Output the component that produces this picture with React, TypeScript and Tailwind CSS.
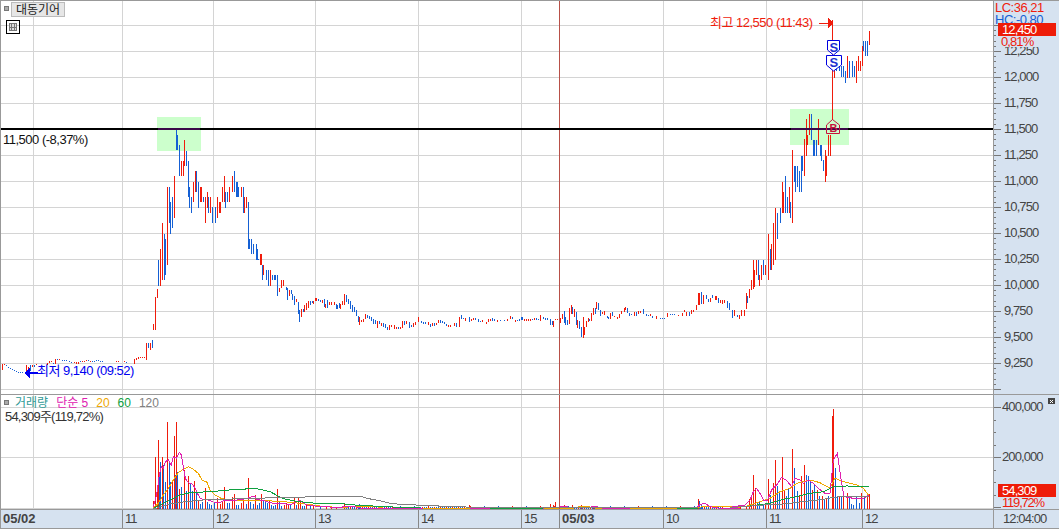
const RED = '#f01c0c'
const BLUE = '#1560d4'

// bars traced from the chart: "x top bottom colour", x/y in 3x units from an origin
const parseBars = (x0: number, y0: number, s: string) =>
  s.split('|').map(r => {
    const [x, t, b, c] = r.trim().split(' ')
    const top = Math.floor(y0 + Number(t) / 3)
    return { x: Math.floor(x0 + Number(x) / 3), y: top, h: Math.max(1, Math.floor(y0 + Number(b) / 3) - top), c: c === 'r' ? RED : BLUE }
  })

const parseVol = (x0: number, y0: number, s: string) =>
  s.split('|').map(r => {
    const [x, t, c] = r.trim().split(' ')
    const top = Math.floor(y0 + Number(t) / 3)
    return { x: Math.floor(x0 + Number(x) / 3), y: top, h: 509 - top, c: c === 'r' ? RED : BLUE }
  })

const pts = (x0: number, y0: number, s: string) =>
  s.split(' ').map(p => {
    const [x, y] = p.split(',')
    return `${x0 + Number(x) / 3},${y0 + Number(y) / 3}`
  }).join(' ')

const priceBars = [
  ...parseBars(0, 355, '6 27 45 r|12 27 30 r|18 30 33 b|24 36 39 b|30 39 42 b|36 42 45 b|42 45 48 b|48 48 51 b|54 51 54 b|60 51 54 b|66 51 54 b|78 30 48 r|84 36 45 r|90 30 48 b|96 30 36 r|102 30 36 b|108 27 30 r|141 24 30 r|147 18 24 r|153 18 21 r|160 24 27 b|165 12 27 r|171 12 15 b|178 12 15 r|186 15 18 b|192 15 18 b|200 15 18 b|208 18 21 b|214 21 24 b|222 21 24 r|228 21 27 r|234 21 27 r|240 18 21 b|246 18 21 r|252 18 21 r|258 15 18 r|264 15 18 b|270 18 21 r|276 18 21 b|282 18 21 b|288 15 18 b|294 15 18 b|300 18 21 b|306 18 21 b|348 18 21 r|354 18 21 r|372 18 21 r|378 21 24 b|402 12 27 r|408 9 15 r|414 6 12 r|420 6 9 r|426 6 9 r|432 6 9 r|438 -12 9 r'),
  ...parseBars(0, 340, '438 10 60 r|444 10 25 b|450 10 30 r|456 0 25 b'),
  ...parseBars(140, 110, '40 642 660 r|46 562 660 r|52 537 566 r|55 450 528 b|61 417 528 r|67 339 510 r|73 372 510 b|76 387 495 b|82 231 465 r|88 231 340 b|90 276 340 b|91 276 372 b|97 261 354 b|103 198 324 r|109 57 120 b|112 75 120 b|118 105 198 b|124 153 198 r|130 153 198 r|133 90 168 r|139 123 168 b|145 153 261 b|148 231 294 b|154 261 309 b|160 216 276 r|167 183 246 r|170 183 246 b|175 216 294 b|182 231 276 r|185 231 276 r|190 261 276 b|196 261 339 r|202 246 294 r|205 261 309 b|211 261 309 r|217 291 339 b|226 291 339 b|232 261 324 r|238 276 309 r|241 276 309 r|247 231 276 r|253 198 276 r|256 246 294 b|262 246 276 b|268 231 276 r|277 198 246 r|283 183 246 b|289 216 261 b|292 216 261 b|295 231 261 b|304 231 261 r|310 231 309 b|313 261 309 r|319 261 294 r|325 276 417 b|328 387 417 b|333 387 432 b|339 402 432 b|348 402 450 b|351 417 450 b|354 447 450 b|362 432 465 r|364 432 465 r|366 465 510 b|370 465 495 r|378 480 510 b|384 480 528 b|390 480 528 r|396 495 510 b|402 495 510 b|405 495 510 b|411 495 558 b|418 534 546 r|424 510 534 r|430 510 528 r|438 531 540 b|442 534 570 b|448 540 558 r|454 540 552 b|457 552 570 b|463 558 585 b|469 567 576 r|475 576 612 b|478 600 636 b|484 597 621 r|490 600 606 r|493 585 606 r|499 579 600 r|505 573 594 r|511 573 585 b|520 573 582 r|528 564 573 r|535 567 573 b'),
  ...parseBars(300, 285, '3 75 96 r|9 72 81 b|14 60 81 r|20 54 72 r|25 51 69 r|31 48 60 b|36 48 54 b|40 48 57 r|46 39 48 r|54 42 48 b|60 45 51 b|66 45 54 r|72 42 66 b|76 57 69 r|82 45 69 b|87 51 60 r|93 51 60 r|102 51 60 r|108 57 72 b|113 60 72 b|118 54 69 b|122 57 72 r|128 48 60 r|133 27 60 r|139 30 51 b|145 42 57 b|150 48 72 b|157 60 81 b|163 66 81 b|169 75 93 b|175 93 111 b|179 96 120 r|185 105 111 r|190 102 111 r|197 87 102 r|203 90 99 b|209 93 102 b|215 96 108 b|221 102 117 b|227 105 117 b|233 108 129 r|239 108 117 b|245 114 123 r|251 114 126 b|257 117 129 b|263 126 135 b|269 120 135 r|275 120 126 r|284 120 132 r|290 126 132 r|296 126 132 b|302 126 132 r|308 108 129 r|314 108 120 b|320 108 117 r|328 111 129 b|334 120 126 b|340 114 126 r|346 111 120 r|355 96 111 r|364 108 114 b|370 111 117 b|376 111 117 b|385 111 120 r|391 117 126 b|397 114 123 r|403 114 123 b|409 114 120 r|415 105 114 r|421 105 114 b|427 108 114 b|433 111 117 b|439 117 123 b|445 120 126 r|451 120 126 r|463 114 123 r|470 114 126 b|478 96 126 r|485 90 102 b|491 99 102 b|497 99 108 r|508 96 111 b|514 102 108 r|520 99 105 r|526 99 105 b|534 102 111 b|540 108 111 b|546 105 111 r|558 111 117 r|564 102 111 r|570 102 108 r|576 99 108 b|582 102 108 b|593 105 111 r|600 105 108 b|612 105 108 b|621 102 108 r|630 93 102 r|636 96 102 b|645 105 111 r|651 105 108 b|657 102 108 b|666 96 105 b|672 102 108 r|680 102 108 r|686 102 108 b'),
  ...parseBars(520, 280, '5 111 120 b|20 117 123 r|26 117 123 r|32 117 123 r|38 117 120 b|44 114 120 r|50 114 120 b|56 117 120 b|62 105 123 r|70 111 117 b|76 114 120 b|82 114 120 b|90 117 135 b|97 123 135 b|100 123 141 r|106 117 120 r|112 117 120 r|121 114 129 r|127 102 117 r|133 93 129 b|136 111 135 b|142 120 135 b|148 84 132 r|154 75 102 r|157 81 102 b|163 87 111 r|169 96 135 b|172 120 144 r|178 123 147 b|184 141 171 b|190 111 174 r|193 141 165 r|198 123 141 r|205 114 126 r|208 117 123 b|214 99 123 r|220 84 105 r|225 84 102 b|229 66 87 r|235 69 90 b|241 90 108 b|247 96 102 r|253 93 105 r|262 108 114 b|265 111 117 b|271 99 117 r|277 96 108 b|283 108 111 r|292 111 117 r|298 102 114 r|304 93 102 r|313 84 96 r|316 81 90 r|322 84 99 b|328 99 108 b|334 102 105 b|343 96 108 r|350 96 108 b|355 93 102 r|361 93 99 r|370 87 102 b|379 102 108 b|385 105 108 b|391 102 108 r|397 108 114 b|408 108 117 r|421 114 117 b|427 114 117 b|433 114 117 b|442 99 111 r|451 102 105 b|457 102 105 b|463 102 105 b|475 105 108 r|486 99 108 r|492 90 96 r|500 96 108 r|507 96 108 b|515 90 102 r|521 90 96 r|529 75 90 r|535 39 75 r|538 39 75 r|544 36 72 b|551 45 72 r|558 45 57 b|565 57 66 b|571 54 66 r|578 45 54 b|587 48 60 r|590 48 60 r|595 54 69 b|601 60 69 r|607 60 72 r|613 60 69 r|621 63 84 b|628 69 90 b|637 90 114 b|643 90 108 r|652 105 111 b|658 105 117 r|664 90 108 r|673 90 108 r|679 39 87 r|682 48 69 b|688 27 54 r|694 0 27 r|700 0 27 r|703 0 21 r|717 0 15 r'),
  ...parseBars(740, 100, '28 567 570 r|34 540 570 r|40 480 561 r|44 510 555 r|49 480 525 r|55 480 540 b|58 525 558 r|64 495 540 r|70 480 525 b|76 495 525 r|85 402 540 r|91 447 510 b|94 432 510 r|100 369 495 r|106 324 480 r|112 339 417 b|121 324 369 b|127 246 339 r|130 276 339 r|136 228 339 b|142 291 339 b|148 261 339 r|151 306 354 b|157 150 369 r|164 198 246 b|166 198 276 b|172 198 261 b|178 213 276 b|184 168 276 b|187 168 213 b|193 118 228 r|199 57 168 r|202 105 135 r|209 42 105 r|214 42 120 b|221 120 168 b|224 120 168 b|228 120 168 b|235 57 135 r|242 135 168 b|245 135 183 b|250 180 213 b|256 150 246 r|259 168 228 r|265 105 168 r|272 105 168 r'),
  ...parseBars(760, 0, '217 60 360 r|217 210 235 r|224 210 235 r|230 200 215 b|237 200 215 b|243 200 232 b|249 200 232 b|255 215 250 b|262 170 235 r|269 185 235 b|276 185 232 b|283 200 232 b|289 185 250 r|295 170 215 r|302 185 215 r|306 138 200 r|309 123 155 b|315 123 170 b|321 123 170 b|327 93 137 r'),
]

const dust = Array.from({ length: 190 }, (_, i) => `${i * 6 + 12} ${i % 7 === 0 ? 108 : 113} ${i % 3 === 0 ? 'r' : 'b'}`).join('|')

const volBars = [
  ...parseVol(140, 410, '40 275 r|46 141 r|52 234 r|55 90 r|58 195 b|61 156 b|67 141 r|70 165 b|76 216 b|82 36 r|88 156 b|91 216 b|97 213 r|103 78 r|106 195 b|109 36 r|112 186 b|118 237 r|124 232 b|133 180 r|139 243 b|145 198 r|151 222 b|157 245 b|163 213 r|169 240 b|175 272 r|181 282 b|187 276 b|196 234 r|203 276 b|209 282 b|215 285 b|223 279 b|232 265 r|241 282 r|247 276 r|253 231 r|262 279 b|268 279 b|277 261 r|283 252 r|290 285 b|296 285 b|304 279 r|310 265 r|318 282 b|325 204 r|331 276 b|340 282 b|346 255 r|352 285 b|358 279 b|364 252 r|370 273 b|376 273 b|382 279 b|388 270 r|394 285 b|400 288 b|406 285 b|412 237 r|418 276 b|424 288 b|433 285 r|440 279 r|446 285 r|452 285 b|463 264 r|470 285 b|476 264 r|482 276 r|488 288 b|494 288 b|500 285 r|510 290 b|520 288 r|540 290 b|560 288 r|575 288 r|590 292 r'),
  ...parseVol(340, 470, dust),
  ...parseVol(340, 470, '13 100 r|58 103 b|388 105 r|600 108 r|630 104 r|640 106 r|645 98 r|672 105 r|697 105 r|724 105 r|760 108 r|1074 87 r|1078 93 b|1085 106 b|1200 108 r'),
  ...parseVol(730, 390, '0 348 r|6 350 b|28 350 r|50 350 r|58 327 r|64 315 r|70 255 r|76 295 r|82 340 b|88 335 b|100 345 b|105 340 r|115 267 r|121 315 b|130 280 r|136 212 r|142 290 b|148 305 b|157 201 r|163 300 r|170 320 b|175 295 b|187 177 r|193 234 b|201 305 b|207 320 r|215 258 r|222 225 r|228 255 b|234 258 b|240 270 b|247 300 r|253 285 b|262 300 r|268 320 b|277 320 r|283 330 b|290 325 r|296 320 b|307 80 r|310 57 r|316 234 b|322 320 b|328 320 r|334 320 b|341 320 r|352 310 r|358 322 b|364 342 b|371 345 b|380 322 b|388 340 b|395 310 r|404 320 b|411 320 r|417 312 r'),
]

const volLines = [
  { c: '#f0a800', p: [
    pts(140, 410, '40,293 55,280 70,255 85,235 100,210 115,188 130,178 145,170 160,178 175,190 187,212 200,215 210,240 225,255 245,266 270,270 330,270 380,272 430,275 480,280 540,288 600,293'),
    pts(340, 470, '0,114 50,108 110,110 130,114 250,115 700,115 720,109 745,109 760,114 870,115 1010,115 1122,109 1175,109 1200,113'),
    pts(730, 390, '0,350 50,348 80,338 120,325 150,305 180,295 200,280 240,270 270,278 300,295 315,265 340,275 380,285 400,295 417,318'),
  ] },
  { c: '#e020b0', p: [
    pts(140, 410, '40,290 46,270 52,240 58,195 64,170 70,175 76,155 85,150 94,165 100,140 109,145 118,127 124,135 130,170 136,205 142,215 148,220 157,222 166,235 172,250 181,265 190,268 205,270 220,276 240,277 255,270 270,272 290,270 310,268 330,262 345,258 350,268 370,272 400,280 430,280 450,285 480,270 500,285 540,290 600,292'),
    pts(340, 470, '0,114 10,110 45,110 60,114 160,114 200,115 600,115 640,112 680,110 700,114 770,110 790,115 1070,114 1080,103 1095,100 1110,110 1140,115 1200,115'),
    pts(730, 390, '0,352 45,345 60,330 70,305 80,295 90,310 100,330 112,332 125,300 140,285 155,262 170,272 185,290 195,265 210,270 220,280 235,270 250,280 265,295 285,310 300,310 310,210 322,190 332,260 342,320 370,325 400,325 417,315'),
  ] },
  { c: '#10a040', p: [
    pts(140, 410, '40,295 70,280 100,265 120,255 150,248 190,246 250,242 285,238 350,236 390,245 430,266 470,274 530,280 600,281'),
    pts(340, 470, '0,100 15,102 55,106 120,109 180,112 240,114'),
    pts(730, 390, '0,353 60,348 120,340 160,328 200,320 240,310 280,305 310,290 350,288 417,289'),
  ] },
  { c: '#808080', p: [
    pts(140, 410, '40,297 90,282 130,276 190,270 250,268 330,265 470,262 550,259 600,260'),
    pts(340, 470, '0,78 60,78 80,85 120,92 150,100 180,103 250,106 340,110 430,112.5 1074,112.5'),
    pts(730, 390, '0,353 100,345 160,342 220,335 280,328 310,322 350,318 417,318'),
  ] },
]

// flat runs along the bottom of the volume pane, in 3x units from x=340
const baseRuns = [
  { a: 160, b: 200, c: '#e020b0' },
  { a: 250, b: 390, c: '#f0a800' },
  { a: 415, b: 450, c: '#e020b0' },
  { a: 450, b: 610, c: '#10a040' },
  { a: 800, b: 865, c: '#e020b0' },
  { a: 870, b: 1010, c: '#f0a800' },
  { a: 1010, b: 1075, c: '#10a040' },
]

const vGrid = [33, 122, 213, 315, 418, 521, 663, 766, 862]
const hGrid = [25, 51, 77, 103, 155, 181, 207, 233, 259, 285, 311, 337, 363, 389]
const prices = ['12,250', '12,000', '11,750', '11,500', '11,250', '11,000', '10,750', '10,500', '10,250', '10,000', '9,750', '9,500', '9,250']
const xCells = [
  { w: 'w-[121px]', t: '05/02', bold: true },
  { w: 'w-[91px]', t: '11' },
  { w: 'w-[102px]', t: '12' },
  { w: 'w-[103px]', t: '13' },
  { w: 'w-[103px]', t: '14' },
  { w: 'w-[38px]', t: '15' },
  { w: 'w-[104px]', t: '05/03', bold: true },
  { w: 'w-[103px]', t: '10' },
  { w: 'w-[96px]', t: '11' },
  { w: 'w-[131px]', t: '12' },
]

const font = 'font-["Liberation_Sans","Noto_Sans_CJK_KR",sans-serif] text-[13px] leading-[14px] tracking-[-0.9px]'

function PriceChart() {
  return (
    <svg className="absolute inset-0 block" width="992" height="393" viewBox="1 1 992 393" shapeRendering="crispEdges">
      {hGrid.map(y => <rect key={y} x="1" y={y} width="992" height="1" fill="#d4d4d4" />)}
      {vGrid.map(x => <rect key={x} x={x} y="1" width="1" height="393" fill="#d4d4d4" />)}
      <rect x="157" y="117" width="44" height="34" fill="#ccffcc" />
      <rect x="790" y="109" width="59" height="36" fill="#ccffcc" />
      <rect x="559" y="1" width="1" height="393" fill="#b85048" />
      {priceBars.map((b, i) => <rect key={i} x={b.x} y={b.y} width="1" height={b.h} fill={b.c} />)}
      <rect x="1" y="128" width="992" height="2" fill="#000" />
      <rect x="158" y="128" width="42" height="2" fill="#3a0a48" />
      <rect x="791" y="128" width="57" height="2" fill="#3a0a48" />
      {/* high marker arrow */}
      <rect x="819" y="23" width="9" height="1" fill={RED} />
      <polygon points="828,18 833,23 828,28" fill={RED} />
      <rect x="832" y="20" width="1" height="20" fill={RED} />
      {/* low marker arrow */}
      <rect x="29" y="372" width="9" height="2" fill="#0000f0" />
      <polygon points="30,367 24,373 30,379" fill="#0000f0" />
      <g shapeRendering="auto">
        <polygon points="827.5,40.5 839.5,40.5 839.5,50 833.5,55 827.5,50" fill="#fff" stroke="#0000e0" />
        <polygon points="826.5,55.5 841.5,55.5 841.5,65 833.5,71 826.5,65" fill="#fff" stroke="#0000e0" />
        <polygon points="832.5,119.5 839.5,125 839.5,133.5 826.5,133.5 826.5,125" fill="none" stroke="#c8103c" />
        <text x="833.5" y="52" textAnchor="middle" fontSize="13" fontWeight="700" fill="#2030d0" fontFamily="Liberation Sans">S</text>
        <text x="833.5" y="67" textAnchor="middle" fontSize="13" fontWeight="700" fill="#2030d0" fontFamily="Liberation Sans">S</text>
        <text x="833" y="132" textAnchor="middle" fontSize="11" fontWeight="700" fill="#c8103c" fontFamily="Liberation Sans">B</text>
      </g>
    </svg>
  )
}

function VolumeChart() {
  return (
    <svg className="absolute inset-0 block" width="992" height="114" viewBox="1 395 992 114" shapeRendering="crispEdges">
      {[407, 457, 508].map(y => <rect key={y} x="1" y={y} width="992" height="1" fill="#d4d4d4" />)}
      {vGrid.map(x => <rect key={x} x={x} y="395" width="1" height="114" fill="#d4d4d4" />)}
      {volBars.map((b, i) => <rect key={i} x={b.x} y={b.y} width="1" height={b.h} fill={b.c} />)}
      {volLines.map(l => l.p.map((p, i) => <polyline key={l.c + i} points={p} fill="none" stroke={l.c} strokeWidth="1" />))}
      {baseRuns.map(r => <rect key={r.a} x={340 + r.a / 3} y="508" width={(r.b - r.a) / 3} height="1" fill={r.c} />)}
      <rect x="559" y="395" width="1" height="114" fill="#b85048" />
    </svg>
  )
}

function AxisTicks({ h, step, big, from }: { h: number; step: number; big: number; from: number }) {
  const n = Math.ceil(h / step)
  return (
    <svg className="absolute left-0 top-0" width="8" height={h} shapeRendering="crispEdges">
      {Array.from({ length: n }, (_, i) => {
        const y = Math.round(from + i * step)
        return <rect key={i} x="0" y={y} width={i % big === 0 ? 7 : 2} height="1" fill="#777" />
      })}
    </svg>
  )
}

export default function App() {
  return (
    <div className={`w-[1059px] h-[529px] flex flex-col overflow-hidden bg-white text-[#444] ${font}`}>
      <div className="flex h-[394px] border-t border-[#999]">
        <div className="relative w-[993px] border-l border-[#999]">
          <PriceChart />
          <div className="absolute left-[3px] top-[5px] w-[5px] h-[5px] bg-[#aaa] border border-[#777]" />
          <div className="absolute left-[10px] top-[1px] w-[54px] h-[15px] flex items-center justify-center bg-[#e6e6e6] border border-[#bbb] text-[#222] tracking-normal text-[12px]">대동기어</div>
          <div className="absolute left-[5px] top-[19px] w-[14px] h-[14px] border border-black p-[2px]">
            <div className="grid grid-cols-3 gap-px h-full bg-[#777] border border-[#777]">
              {[0, 1, 2, 3, 4, 5].map(i => <div key={i} className="bg-[#ddd]" />)}
            </div>
          </div>
          <div className="absolute left-[2px] top-[132px] text-[#111] tracking-[-0.5px]">11,500 (-8,37%)</div>
          <div className="absolute left-[709px] top-[15px] text-[#f01c0c] tracking-[-0.5px]">최고 12,550 (11:43)</div>
          <div className="absolute left-[36px] top-[363px] text-[#0000f0] tracking-[-0.5px]">최저 9,140 (09:52)</div>
        </div>
        <div className="relative w-[66px] bg-[#d6e2f0] border-l border-[#999]">
          <AxisTicks h={393} step={5.2} big={5} from={24} />
          <div className="flex flex-col pt-[37px] pl-[10px]">
            {prices.map(p => <div key={p} className="h-[26px] flex items-center">{p}</div>)}
          </div>
          <div className="absolute left-0 top-0 pl-[1px] text-[#f01c0c] tracking-[-0.5px]">LC:36,21</div>
          <div className="absolute left-0 top-[12px] pl-[1px] text-[#1560d4] tracking-[-0.5px]">HC:-0,80</div>
          <div className="absolute left-[4px] top-[22px] w-[58px] h-[13px] flex items-center pl-[4px] bg-[#ee1c08] text-white">12,450</div>
          <div className="absolute left-[4px] top-[35px] w-[40px] h-[11px] pl-[3px] flex items-center bg-[#d6e2f0] text-[#f01c0c]">0,81%</div>
        </div>
      </div>
      <div className="flex h-[115px] border-t border-[#999]">
        <div className="relative w-[993px] border-l border-[#999]">
          <VolumeChart />
          <div className="absolute left-[3px] top-[5px] w-[5px] h-[5px] bg-[#aaa] border border-[#777]" />
          <div className="absolute left-[14px] top-[1px] flex gap-[8px] tracking-normal text-[12px]">
            <span className="text-[#2f9a96]">거래량</span>
            <span className="text-[#e020b0]">단순 5</span>
            <span className="text-[#f0a800]">20</span>
            <span className="text-[#10a040]">60</span>
            <span className="text-[#808080]">120</span>
          </div>
          <div className="absolute left-[4px] top-[15px] text-[#333] tracking-[-0.8px]">54,309주(119,72%)</div>
        </div>
        <div className="relative w-[66px] bg-[#d6e2f0] border-l border-[#999]">
          <AxisTicks h={114} step={12.5} big={4} from={12} />
          <div className="flex flex-col pl-[8px]">
            <div className="h-[24px] flex items-center">400,000</div>
            <div className="h-[24px] mt-[26px] flex items-center">200,000</div>
          </div>
          <svg className="absolute right-[4px] top-[3px]" width="7" height="6" viewBox="0 0 7 6" shapeRendering="crispEdges">
            <rect width="7" height="6" fill="#444" />
            <path d="M2 2h1v1H2zM4 2h1v1H4zM3 3h1v1H3zM2 4h1v1H2zM4 4h1v1H4z" fill="#fff" />
          </svg>
          <div className="absolute left-[4px] top-[89px] w-[58px] h-[13px] flex items-center pl-[4px] bg-[#ee1c08] text-white">54,309</div>
          <div className="absolute left-[8px] top-[102px] text-[#f01c0c] leading-[11px] tracking-[-1.2px]">119,72%</div>
        </div>
      </div>
      <div className="flex h-[20px] bg-[#d6e2f0] border-t border-b border-[#999]">
        <div className="flex w-[993px] border-l border-[#999]">
          {xCells.map((c, i) => (
            <div key={i} className={`${c.w} flex items-center pl-[2px] ${i > 0 ? 'border-l border-[#888]' : ''} ${c.bold ? 'font-bold tracking-normal' : ''}`}>{c.t}</div>
          ))}
        </div>
        <div className="w-[66px] flex items-center pl-[9px] border-l border-[#999]">12:04:00</div>
      </div>
    </div>
  )
}
